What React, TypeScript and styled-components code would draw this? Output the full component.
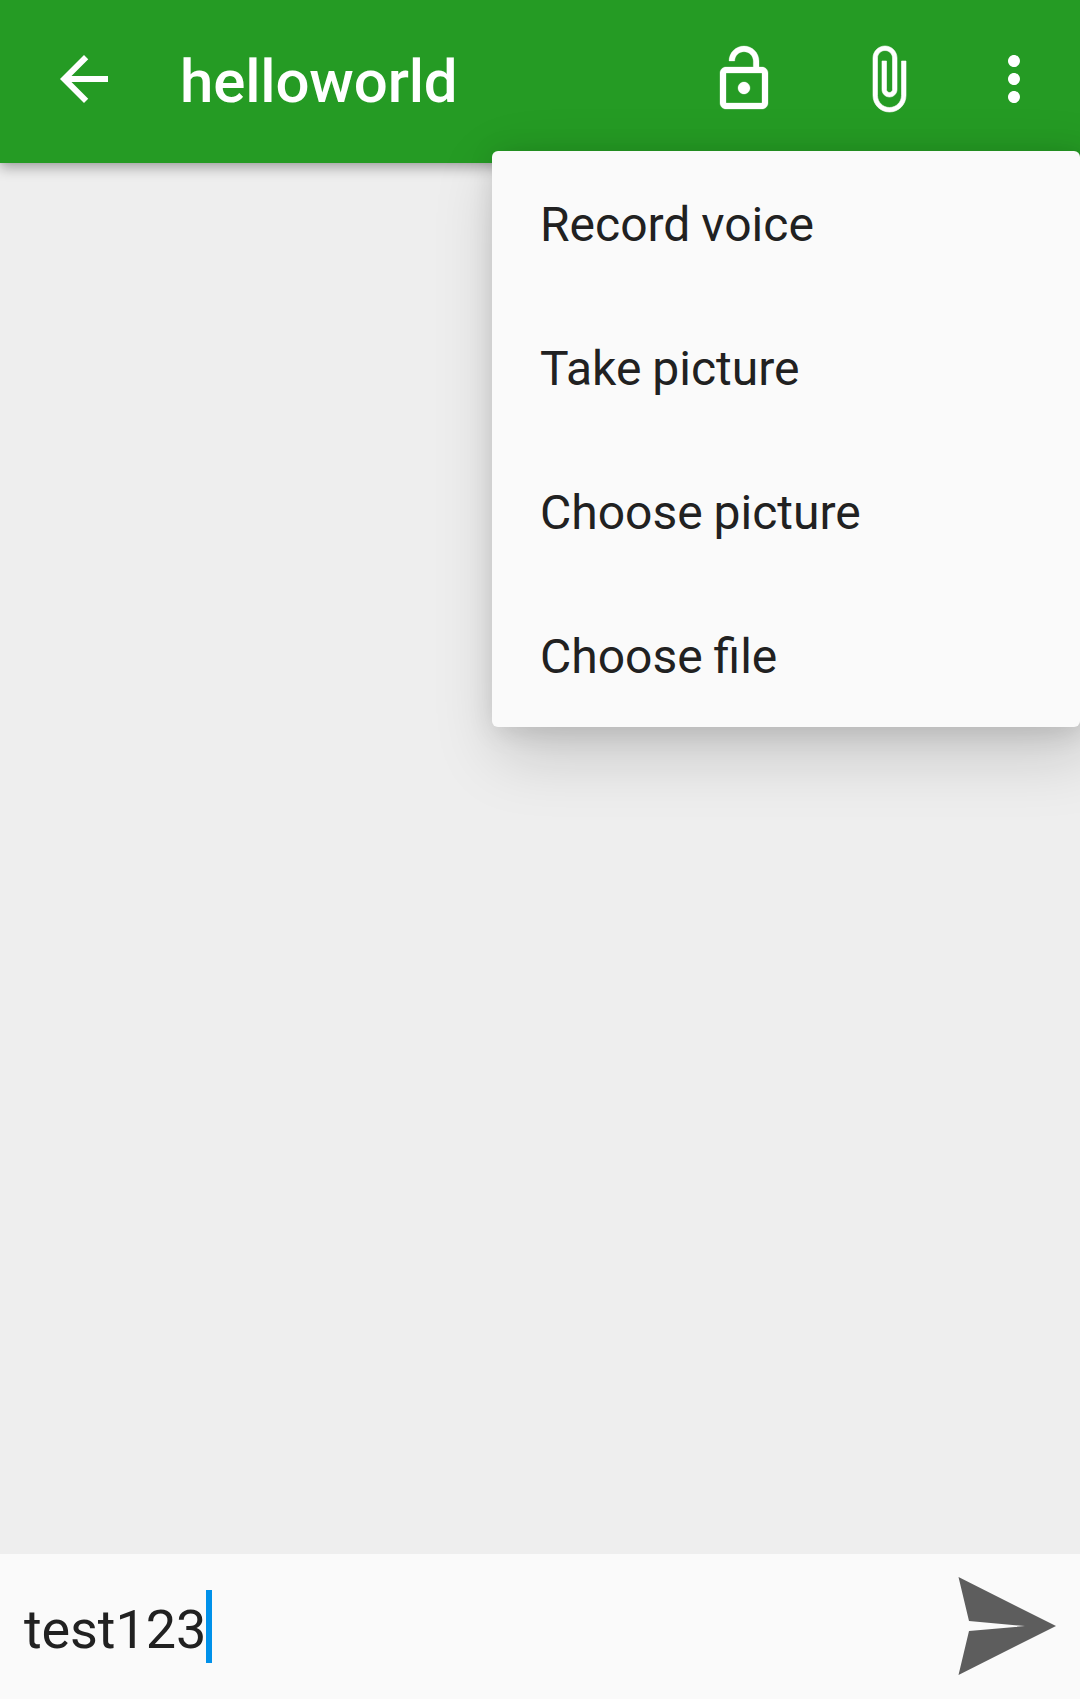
import React from "react";
import styled, { createGlobalStyle } from "styled-components";

const GlobalStyle = createGlobalStyle`
  *, *::before, *::after { box-sizing: border-box; }
  body { margin: 0; font-family: Roboto, "Liberation Sans", sans-serif; }
`;

const Screen = styled.div`
  position: relative;
  display: flex;
  flex-direction: column;
  width: 1080px;
  height: 1699px;
  overflow: hidden;
  background: #eeeeee;
  color: #212121;
`;

const Toolbar = styled.header`
  display: flex;
  align-items: center;
  flex: none;
  height: 163px;
  padding: 0 30px 5px 48px;
  background: #259b24;
  color: #ffffff;
  box-shadow: 0 5px 12px rgba(0, 0, 0, 0.3), 0 0 3px rgba(0, 0, 0, 0.08);
`;

const Title = styled.h1`
  flex: 1;
  margin: 6px 0 0 60px;
  font-size: 60px;
  line-height: 70px;
  font-weight: 500;
  letter-spacing: -0.15px;
`;

const Actions = styled.div`
  display: flex;
  align-items: center;
  gap: 72px;
`;

const IconButton = styled.button<{ $pull?: number; $lift?: number }>`
  display: flex;
  flex: none;
  padding: 0;
  border: 0;
  margin-left: ${(p) => -(p.$pull ?? 0)}px;
  margin-bottom: ${(p) => p.$lift ?? 0}px;
  background: none;
  color: inherit;
`;

const Glyph = styled.svg<{ $weight: number }>`
  display: block;
  width: 72px;
  height: 72px;
  fill: currentColor;
  stroke: ${(p) => (p.$weight ? "currentColor" : "none")};
  stroke-width: ${(p) => p.$weight};
`;

const Messages = styled.main`
  flex: 1;
`;

const Menu = styled.ul`
  position: absolute;
  top: 151px;
  right: 0;
  width: 588px;
  margin: 0;
  padding: 0;
  list-style: none;
  border-radius: 6px;
  background: #fafafa;
  box-shadow: 10px 24px 64px 4px rgba(0, 0, 0, 0.17), 3px 3px 28px rgba(0, 0, 0, 0.13);
`;

const MenuItem = styled.li`
  display: flex;
  align-items: center;
  height: 144px;
  padding: 4px 48px 0;
  font-size: 48px;
  line-height: 56px;
  word-spacing: -1px;
`;

const Composer = styled.footer`
  display: flex;
  align-items: center;
  flex: none;
  height: 145px;
  padding: 0 24px;
  background: #fafafa;
`;

const Field = styled.div`
  display: flex;
  align-items: center;
  flex: 1;
  font-size: 54px;
  line-height: 64px;
`;

const Draft = styled.span`
  padding-top: 7px;
  letter-spacing: -0.1px;
`;

const Caret = styled.span`
  width: 6px;
  height: 73px;
  background: #0091ea;
`;

const SendGlyph = styled.svg`
  display: block;
  width: 98px;
  height: 98px;
  fill: #5d5d5d;
`;

const icons = {
  back: "M20 11H7.83l5.59-5.59L12 4l-8 8 8 8 1.41-1.41L7.83 13H20v-2z",
  unlock:
    "M12 17c1.1 0 2-.9 2-2s-.9-2-2-2-2 .9-2 2 .9 2 2 2zm6-9h-1V6c0-2.76-2.24-5-5-5S7 3.24 7 6h1.9c0-1.71 1.39-3.1 3.1-3.1 1.71 0 3.1 1.39 3.1 3.1v2H6c-1.1 0-2 .9-2 2v10c0 1.1.9 2 2 2h12c1.1 0 2-.9 2-2V10c0-1.1-.9-2-2-2zm0 12H6V10h12v10z",
  attach:
    "M16.5 6v11.5c0 2.21-1.79 4-4 4s-4-1.79-4-4V5c0-1.38 1.12-2.5 2.5-2.5s2.5 1.12 2.5 2.5v10.5c0 .55-.45 1-1 1s-1-.45-1-1V6H10v9.5c0 1.38 1.12 2.5 2.5 2.5s2.5-1.12 2.5-2.5V5c0-2.21-1.79-4-4-4S7 2.79 7 5v12.5c0 3.04 2.46 5.5 5.5 5.5s5.5-2.46 5.5-5.5V6h-1.5z",
  more: "M12 8c1.1 0 2-.9 2-2s-.9-2-2-2-2 .9-2 2 .9 2 2 2zm0 2c-1.1 0-2 .9-2 2s.9 2 2 2 2-.9 2-2-.9-2-2-2zm0 6c-1.1 0-2 .9-2 2s.9 2 2 2 2-.9 2-2-.9-2-2-2z",
};

const menuItems = ["Record voice", "Take picture", "Choose picture", "Choose file"];

function Icon({ name, weight = 0 }: { name: keyof typeof icons; weight?: number }) {
  return (
    <Glyph viewBox="0 0 24 24" $weight={weight} aria-hidden="true">
      <path d={icons[name]} />
    </Glyph>
  );
}

export default function App() {
  return (
    <>
      <GlobalStyle />
      <Screen>
        <Toolbar>
          <IconButton aria-label="Back">
            <Icon name="back" />
          </IconButton>
          <Title>helloworld</Title>
          <Actions>
            <IconButton aria-label="Encryption">
              <Icon name="unlock" weight={0.1} />
            </IconButton>
            <IconButton aria-label="Attach">
              <Icon name="attach" weight={0.2} />
            </IconButton>
            <IconButton aria-label="More options" $pull={18}>
              <Icon name="more" />
            </IconButton>
          </Actions>
        </Toolbar>
        <Messages />
        <Composer>
          <Field>
            <Draft>test123</Draft>
            <Caret />
          </Field>
          <IconButton aria-label="Send" $lift={1}>
            <SendGlyph viewBox="0 0 98 98" aria-hidden="true">
              <path d="M0.5 0L98 49 0.5 98 11 54 67 49 11 44z" />
            </SendGlyph>
          </IconButton>
        </Composer>
        <Menu>
          {menuItems.map((label) => (
            <MenuItem key={label}>{label}</MenuItem>
          ))}
        </Menu>
      </Screen>
    </>
  );
}
